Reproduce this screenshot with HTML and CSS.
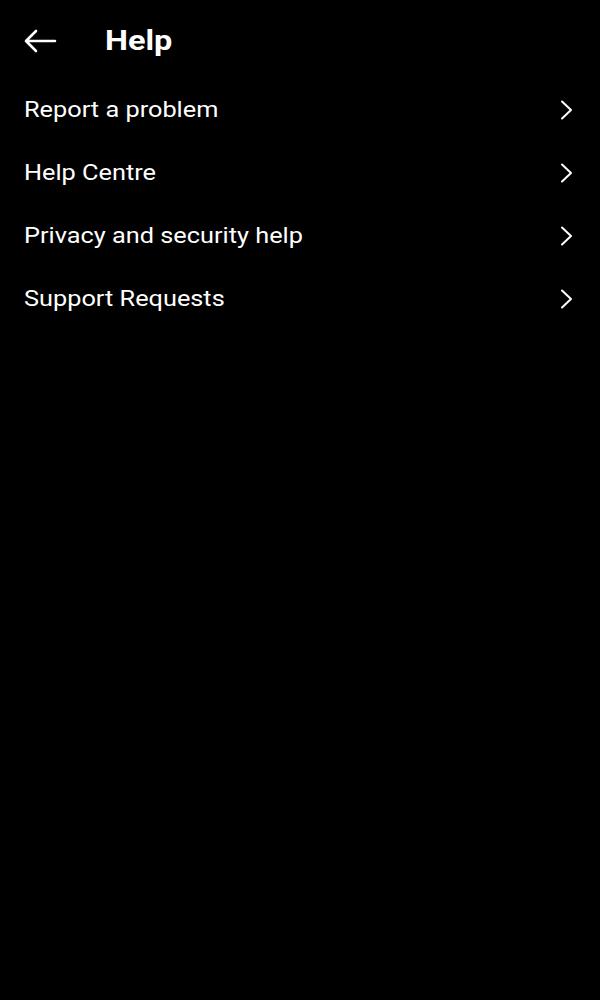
FILE: index.html
```html
<!DOCTYPE html>
<html lang="en">

<head>
    <meta charset="UTF-8">
    <meta name="viewport" content="width=device-width, initial-scale=1.0">
    <title>Help</title>
    <link rel="stylesheet" href="styles.css">
</head>

<body>
    <!-- Top bar -->
    <div class="topbar">
        <svg class="back" width="34" height="24" viewBox="0 0 34 24">
            <path d="M32 12H3M13 2L3 12l10 10" fill="none" stroke="#fff" stroke-width="2.6" stroke-linecap="round" stroke-linejoin="round" />
        </svg>
        <h1 class="title">Help</h1>
    </div>

    <!-- Menu list -->
    <div class="menu">
        <div class="row">
            <span class="label">Report a problem</span>
            <svg class="chev" width="14" height="20" viewBox="0 0 14 20"><path d="M2 1.5l9 8.5-9 8.5" /></svg>
        </div>
        <div class="row">
            <span class="label">Help Centre</span>
            <svg class="chev" width="14" height="20" viewBox="0 0 14 20"><path d="M2 1.5l9 8.5-9 8.5" /></svg>
        </div>
        <div class="row">
            <span class="label">Privacy and security help</span>
            <svg class="chev" width="14" height="20" viewBox="0 0 14 20"><path d="M2 1.5l9 8.5-9 8.5" /></svg>
        </div>
        <div class="row">
            <span class="label">Support Requests</span>
            <svg class="chev" width="14" height="20" viewBox="0 0 14 20"><path d="M2 1.5l9 8.5-9 8.5" /></svg>
        </div>
    </div>
</body>

</html>
```

FILE: styles.css
```css
body {
    font-family: Roboto, "Liberation Sans", sans-serif;
    background-color: #000;
    color: #fff;
    margin: 0;
    padding: 0;
    min-height: 100vh;
}

.topbar {
    display: flex;
    align-items: center;
    height: 75px;
    padding: 3px 24px 0;
}

.back {
    display: block;
    margin-left: -1px;
}

.title {
    font-size: 28px;
    font-weight: bold;
    margin: 0 0 0 48px;
    transform: scaleX(1.16); /* screenshot text is a bit wide */
    transform-origin: left center;
}

.menu {
    display: flex;
    flex-direction: column;
}

.row {
    display: flex;
    align-items: center;
    justify-content: space-between;
    height: 63px;
    padding: 0 26px 0 24px;
    font-size: 22px;
}

.label {
    display: inline-block;
    transform: scaleX(1.15);
    transform-origin: left center;
}

.chev path {
    fill: none;
    stroke: #fff;
    stroke-width: 2;
    stroke-linecap: round;
    stroke-linejoin: round;
}
```
